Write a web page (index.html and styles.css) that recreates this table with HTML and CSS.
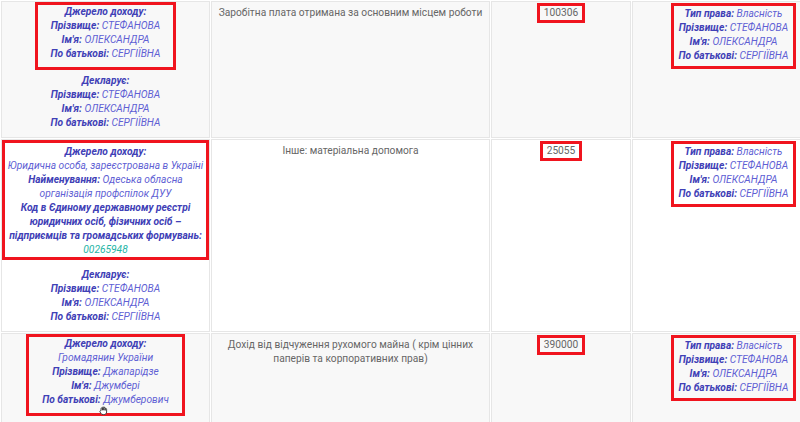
FILE: index.html
```html
<!DOCTYPE html>
<html lang="uk">
<head>
  <meta charset="UTF-8">
  <meta name="viewport" content="width=device-width, initial-scale=1.0">
  <title>Доходи</title>
  <link rel="stylesheet" href="styles.css">
</head>
<body>
  <table class="income">
    <colgroup>
      <col class="c-src">
      <col class="c-kind">
      <col class="c-sum">
      <col class="c-owner">
    </colgroup>
    <tr>
      <td class="src">
        <div class="mark mark-person">
          <p><b>Джерело доходу:</b></p>
          <p><b>Прізвище:</b> <i>СТЕФАНОВА</i></p>
          <p><b>Ім'я:</b> <i>ОЛЕКСАНДРА</i></p>
          <p><b>По батькові:</b> <i>СЕРГІЇВНА</i></p>
        </div>
        <div class="declarant">
          <p><b>Декларує:</b></p>
          <p><b>Прізвище:</b> <i>СТЕФАНОВА</i></p>
          <p><b>Ім'я:</b> <i>ОЛЕКСАНДРА</i></p>
          <p><b>По батькові:</b> <i>СЕРГІЇВНА</i></p>
        </div>
      </td>
      <td class="kind">Заробітна плата отримана за основним місцем роботи</td>
      <td class="sum"><div class="mark mark-num">100306</div></td>
      <td class="owner">
        <div class="mark mark-owner">
          <p><b>Тип права:</b> <i>Власність</i></p>
          <p><b>Прізвище:</b> <i>СТЕФАНОВА</i></p>
          <p><b>Ім'я:</b> <i>ОЛЕКСАНДРА</i></p>
          <p><b>По батькові:</b> <i>СЕРГІЇВНА</i></p>
        </div>
      </td>
    </tr>
    <tr>
      <td class="src">
        <div class="mark mark-org">
          <p><b>Джерело доходу:</b></p>
          <p><i>Юридична особа, зареєстрована в Україні</i></p>
          <p><b>Найменування:</b> <i>Одеська обласна організація профспілок ДУУ</i></p>
          <p><b>Код в Єдиному державному реєстрі юридичних осіб, фізичних осіб – підприємців та громадських формувань:</b></p>
          <p><a class="code" href="#">00265948</a></p>
        </div>
        <div class="declarant">
          <p><b>Декларує:</b></p>
          <p><b>Прізвище:</b> <i>СТЕФАНОВА</i></p>
          <p><b>Ім'я:</b> <i>ОЛЕКСАНДРА</i></p>
          <p><b>По батькові:</b> <i>СЕРГІЇВНА</i></p>
        </div>
      </td>
      <td class="kind">Інше: матеріальна допомога</td>
      <td class="sum"><div class="mark mark-num">25055</div></td>
      <td class="owner">
        <div class="mark mark-owner">
          <p><b>Тип права:</b> <i>Власність</i></p>
          <p><b>Прізвище:</b> <i>СТЕФАНОВА</i></p>
          <p><b>Ім'я:</b> <i>ОЛЕКСАНДРА</i></p>
          <p><b>По батькові:</b> <i>СЕРГІЇВНА</i></p>
        </div>
      </td>
    </tr>
    <tr>
      <td class="src">
        <div class="mark mark-person mark-last">
          <p><b>Джерело доходу:</b></p>
          <p><i>Громадянин України</i></p>
          <p><b>Прізвище:</b> <i>Джапарідзе</i></p>
          <p><b>Ім'я:</b> <i>Джумбері</i></p>
          <p><b>По батькові:</b> <i>Джумберович</i></p>
          <div class="cursor">
            <svg width="9" height="9" viewBox="0 0 9 9"><path d="M2 4.6V2.6a.7.7 0 0 1 1.4 0V4.2M3.4 4.2V1.6a.7.7 0 0 1 1.4 0v2.6M4.8 4.2V2a.7.7 0 0 1 1.4 0v2.4M6.2 4.4V3.2a.7.7 0 0 1 1.4 0V6c0 1.6-1.2 2.6-2.8 2.6H4.1c-1.1 0-1.8-.6-2.3-1.4L.9 5.7a.7.7 0 0 1 1.1-.8L2 5" fill="#fff" stroke="#333" stroke-width=".9"/></svg>
          </div>
        </div>
      </td>
      <td class="kind">Дохід від відчуження рухомого майна ( крім цінних паперів та корпоративних прав)</td>
      <td class="sum"><div class="mark mark-num">390000</div></td>
      <td class="owner">
        <div class="mark mark-owner">
          <p><b>Тип права:</b> <i>Власність</i></p>
          <p><b>Прізвище:</b> <i>СТЕФАНОВА</i></p>
          <p><b>Ім'я:</b> <i>ОЛЕКСАНДРА</i></p>
          <p><b>По батькові:</b> <i>СЕРГІЇВНА</i></p>
        </div>
      </td>
    </tr>
  </table>
</body>
</html>
```

FILE: styles.css
```css
html, body {
  margin: 0;
  overflow: hidden;
  background-color: #fff;
}
body {
  font-family: Roboto, "Noto Sans", Arial, sans-serif;
  font-size: 10.2px;
  line-height: 14px;
  color: #666;
}
p {
  margin: 0;
}
b {
  font-style: italic;
  font-weight: bold;
  color: #4040b6;
}
i {
  color: #6060d4;
}
.income {
  table-layout: fixed;
  width: 836px;
  border-collapse: separate;
  border-spacing: 1px;
}
.c-src { width: 209px; }
.c-kind { width: 279px; }
.c-sum { width: 140px; }
.c-owner { width: 203px; }
.income td {
  border: 1px solid #e6e6e6;
  vertical-align: top;
  text-align: center;
  padding: 0 3px 7px;
}
.income tr:nth-child(odd) td {
  background-color: #f8f8f8;
}
.income td.kind {
  padding-top: 4px;
}
.mark {
  border: 3px solid #f0141e;
  width: fit-content;
  margin: 0 auto;
}
.mark-person {
  padding: 0 13px 6px;
}
.mark-last {
  padding-bottom: 0;
}
.mark-org {
  padding: 2px 0 0;
  margin: 0 -3px 8px;
}
.mark-num {
  margin-top: 1px;
  padding: 0 4px;
}
.mark-owner {
  margin-top: 1px;
  padding: 1px 5px 3px;
}
.declarant {
  margin-top: 4px;
}
.code {
  color: #26b5a6;
  font-style: italic;
  text-decoration: none;
}
.cursor {
  height: 6px;
  line-height: 0;
}
.cursor svg {
  margin-top: -1px;
  margin-right: 5px;
}
```
